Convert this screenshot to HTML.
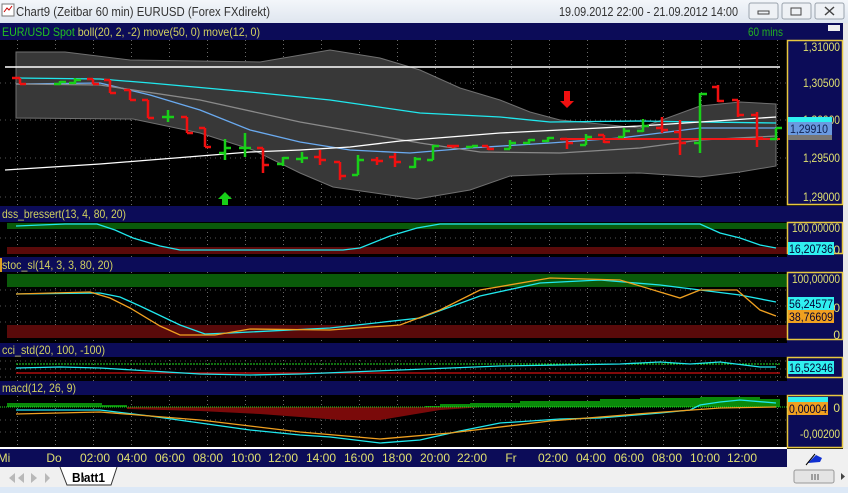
<!DOCTYPE html>
<html><head><meta charset="utf-8"><style>
body{margin:0;width:848px;height:493px;overflow:hidden;background:#f0f0f0;font-family:"Liberation Sans",sans-serif}
svg{display:block}
</style></head><body>
<svg width="848" height="493" viewBox="0 0 848 493" xmlns="http://www.w3.org/2000/svg" font-family="Liberation Sans, sans-serif">
<defs>
<linearGradient id="tb" x1="0" y1="0" x2="0" y2="1"><stop offset="0" stop-color="#f3f6fa"/><stop offset="1" stop-color="#dfe6ef"/></linearGradient>
<pattern id="vg" width="38" height="4" patternUnits="userSpaceOnUse" x="17"><rect x="0" y="0" width="1" height="1" fill="#6a6a6a"/></pattern>
</defs>
<rect x="0" y="0" width="848" height="23" fill="url(#tb)"/>
<rect x="2" y="4" width="12" height="12" fill="#fff" stroke="#777"/><path d="M4 12 l3-4 2 2 3-4" stroke="#c00" fill="none"/>
<text x="16" y="16" font-size="13" fill="#333" textLength="254" lengthAdjust="spacingAndGlyphs">Chart9 (Zeitbar 60 min)  EURUSD (Forex FXdirekt)</text>
<text x="559" y="16" font-size="13" fill="#333" textLength="179" lengthAdjust="spacingAndGlyphs">19.09.2012 22:00 - 21.09.2012 14:00</text>
<g fill="#eef1f5" stroke="#9aa3ad"><rect x="749" y="3" width="29" height="16" rx="2"/><rect x="782" y="3" width="29" height="16" rx="2"/><rect x="815" y="3" width="29" height="16" rx="2"/></g>
<rect x="758" y="11" width="11" height="3" fill="none" stroke="#444"/><rect x="791" y="8" width="10" height="7" fill="none" stroke="#444"/><path d="M825 7 l9 8 M834 7 l-9 8" stroke="#444" stroke-width="1.5"/>
<rect x="0" y="23" width="848" height="444" fill="#000"/>
<rect x="843" y="23" width="5" height="444" fill="#e8e8e8"/>
<g fill="#0c0c58">
<rect x="0" y="23" width="843" height="17"/><rect x="0" y="206" width="787" height="16"/><rect x="0" y="257" width="787" height="15"/><rect x="0" y="343" width="787" height="14"/><rect x="0" y="381" width="787" height="14"/>
<rect x="787" y="206" width="56" height="16"/><rect x="787" y="254" width="56" height="18"/><rect x="787" y="340" width="56" height="17"/><rect x="787" y="378" width="56" height="17"/>
</g>
<rect x="828" y="25" width="12" height="6" fill="#eee"/>
<text x="2" y="36" font-size="12" fill="#22c022" textLength="258" lengthAdjust="spacingAndGlyphs">EUR/USD Spot <tspan fill="#d0d060">boll(20, 2, -2) move(50, 0) move(12, 0)</tspan></text>
<text x="748" y="36" font-size="12" fill="#22b022" textLength="35" lengthAdjust="spacingAndGlyphs">60 mins</text>
<g font-size="12" fill="#d0d060">
<text x="2" y="218" textLength="124" lengthAdjust="spacingAndGlyphs">dss_bressert(13, 4, 80, 20)</text>
<text x="2" y="269" textLength="111" lengthAdjust="spacingAndGlyphs">stoc_sl(14, 3, 3, 80, 20)</text>
<text x="2" y="354" textLength="103" lengthAdjust="spacingAndGlyphs">cci_std(20, 100, -100)</text>
<text x="2" y="392" textLength="74" lengthAdjust="spacingAndGlyphs">macd(12, 26, 9)</text>
</g>
<rect x="0" y="258" width="2" height="14" fill="#e0a020"/>
<rect x="0" y="40" width="787" height="166" fill="url(#vg)"/>
<rect x="0" y="222" width="787" height="35" fill="url(#vg)"/>
<rect x="0" y="272" width="787" height="71" fill="url(#vg)"/>
<rect x="0" y="357" width="787" height="24" fill="url(#vg)"/>
<rect x="0" y="395" width="787" height="53" fill="url(#vg)"/>
<g stroke="#555" stroke-dasharray="1 4">
<path d="M0 83H787M0 120H787M0 158H787M0 197H787M0 238H787M0 290H787M0 306H787M0 322H787M0 361H787M0 369H787M0 377H787M0 420H787M0 432H787"/>
</g>
<path d="M16 52 L65 52 L130 60 L260 62 L330 50 L380 58 L420 70 L460 88 L500 100 L530 112 L560 120 L640 128 L700 106 L740 102 L776 104 L776 166 L740 172 L700 177 L640 173 L560 174 L510 176 L470 190 L417 199 L333 187 L300 173 L253 150 L200 133 L133 119 L16 118 Z" fill="#383838" stroke="#707070" stroke-width="1"/>
<path d="M5 67H780" stroke="#fff" stroke-width="1.5"/>
<g fill="none" stroke-width="1.3">
<polyline stroke="#20e8ee" points="16,78 100,79 150,83 250,92 330,100 420,113 500,117 550,122 640,121 700,122 776,123"/>
<polyline stroke="#6aaaf0" points="16,84 100,83 150,95 200,110 250,130 300,142 350,150 410,153 470,148 550,143 620,138 700,128 776,128"/>
<polyline stroke="#8a8a8a" points="16,84 100,85 200,100 300,122 420,143 480,152 560,153 640,148 700,140 776,136"/>
<polyline stroke="#fff" points="5,170 100,164 200,156 250,152 300,150 350,147 400,141 450,137 500,133 560,130 640,126 700,122 776,117"/>
<path d="M560 139H780" stroke="#f01818" stroke-width="2"/>
</g>
<g stroke-width="2.5" fill="none">
<g stroke="#f01010">
<path d="M20 78v6M12 78h8M20 84h6"/><path d="M93 79v5M87 79h6M93 84h6"/><path d="M110 80v13M104 80h6M110 93h6"/><path d="M130 90v10M124 90h6M130 100h6"/><path d="M148 100v18M142 100h6M148 118h6"/><path d="M187 117v16M181 117h6M187 133h6"/><path d="M205 128v19M199 128h6M205 147h6"/><path d="M263 148v25M257 148h6M263 165h6"/><path d="M320 150v15M314 157h6M320 160h6"/><path d="M340 162v18M334 162h6M340 176h6"/><path d="M377 157v8M371 160h6M377 161h6"/><path d="M395 153v14M389 157h6M395 162h6"/><path d="M453 145v3M447 146h6M453 146h6"/><path d="M488 146v4M482 146h6M488 149h6"/><path d="M567 139v10M561 139h6M567 143h6"/><path d="M604 135v8M598 135h6M604 142h6"/><path d="M662 117v16M656 128h6M662 130h6"/><path d="M680 120v35M674 132h6M680 143h6"/><path d="M718 85v17M712 87h6M718 101h6"/><path d="M738 100v17M732 100h6M738 115h6"/><path d="M757 112v35M751 115h6M757 138h6"/>
</g>
<g stroke="#18d018">
<path d="M60 81v4M54 84h6M60 82h6"/><path d="M75 78v6M69 83h6M75 80h6"/><path d="M168 110v12M162 117h6M168 117h6"/><path d="M225 139v21M219 153h6M225 148h6"/><path d="M245 133v24M239 148h6M245 148h6"/><path d="M283 157v9M277 164h6M283 158h6"/><path d="M302 152v11M296 159h6M302 158h6"/><path d="M358 155v20M352 175h6M358 160h6"/><path d="M415 157v11M409 167h6M415 159h6"/><path d="M433 145v15M427 160h6M433 146h6"/><path d="M472 146v2M466 147h6M472 146h6"/><path d="M510 140v9M504 149h6M510 143h6"/><path d="M529 139v5M523 143h6M529 140h6"/><path d="M548 137v5M542 141h6M548 138h6"/><path d="M586 134v11M580 145h6M586 137h6"/><path d="M624 128v9M618 137h6M624 131h6"/><path d="M643 119v13M637 131h6M643 126h6"/><path d="M700 93v60M694 143h6M700 94h7"/><path d="M776 128v12M770 139h6M776 128h6"/>
</g>
</g>
<path d="M225 192l-7 7h4v6h6v-6h4z" fill="#18d018"/>
<path d="M567 108l-7-7h4v-10h6v10h4z" fill="#f01010"/>
<rect x="7" y="223" width="780" height="6" fill="#0a5a0a"/><rect x="7" y="247" width="780" height="7" fill="#5a0a0a"/>
<polyline fill="none" stroke="#20e8ee" stroke-width="1.3" points="16,226 65,224 97,224 115,230 133,238 160,246 180,250 343,250 360,248 390,236 417,228 440,224 700,224 720,233 740,238 760,245 776,248"/>
<rect x="7" y="274" width="780" height="13" fill="#0a5a0a"/><rect x="7" y="325" width="780" height="13" fill="#5a0a0a"/>
<polyline fill="none" stroke="#20e8ee" stroke-width="1.3" points="16,294 100,293 120,297 140,306 180,325 205,334 230,333 330,328 420,318 480,296 540,283 600,280 660,285 700,290 740,295 776,302"/>
<polyline fill="none" stroke="#f0a020" stroke-width="1.3" points="16,294 90,292 110,298 130,308 160,326 180,335 215,335 250,329 330,330 400,325 440,310 480,290 550,278 620,280 680,298 700,290 737,290 760,310 776,316"/>
<path d="M16 364H780" stroke="#22e022" stroke-dasharray="2 1"/><path d="M16 373H780" stroke="#d01010" stroke-width="1.3"/>
<polyline fill="none" stroke="#20e8ee" stroke-width="1.3" points="16,368 60,367 100,368 150,371 200,374 250,375 300,374 350,372 400,370 450,368 500,366 560,365 620,364 660,362 690,364 720,362 760,367 776,367"/>
<rect x="7" y="403" width="95" height="4" fill="#0a8a0a"/><rect x="102" y="405" width="25" height="2" fill="#0a8a0a"/>
<path d="M127 407 L127 409 L200 411 L260 414 L300 417 L340 420 L380 420 L410 415 L440 410 L470 408 L480 407 Z" fill="#7a0a0a"/>
<path d="M425 407 V406 H440 V404 H470 V403 H520 V401 H600 V399 H640 V398 H700 V397 H760 V399 H780 V407 Z" fill="#0a8a0a"/>
<path d="M0 407H787" stroke="#22e022" stroke-dasharray="1 1"/>
<polyline fill="none" stroke="#20e8ee" stroke-width="1.3" points="16,410 100,410 150,416 200,423 250,430 300,435 330,437 380,443 420,440 460,431 500,423 560,419 600,418 660,413 690,410 700,405 720,402 740,400 776,403"/>
<polyline fill="none" stroke="#f0a020" stroke-width="1.3" points="16,414 100,412 200,420 300,432 380,439 450,433 550,421 650,413 720,408 776,407"/>
<path d="M0 448H787" stroke="#fff" stroke-width="2"/>
<g fill="#0c0c58" stroke="#e8c840" stroke-width="1.5">
<rect x="787.5" y="40.5" width="55" height="164"/><rect x="787.5" y="222.5" width="55" height="31"/><rect x="787.5" y="272.5" width="55" height="67"/><rect x="787.5" y="357.5" width="55" height="20"/><rect x="787.5" y="395.5" width="55" height="52"/>
</g>
<g font-size="12" fill="#e0e070" text-anchor="end" lengthAdjust="spacingAndGlyphs">
<text x="840" y="51" textLength="37" lengthAdjust="spacingAndGlyphs">1,31000</text><text x="840" y="87" textLength="37" lengthAdjust="spacingAndGlyphs">1,30500</text><text x="840" y="124" textLength="37" lengthAdjust="spacingAndGlyphs">1,30000</text><text x="840" y="162" textLength="37" lengthAdjust="spacingAndGlyphs">1,29500</text><text x="840" y="201" textLength="37" lengthAdjust="spacingAndGlyphs">1,29000</text>
<text x="840" y="232" textLength="48" lengthAdjust="spacingAndGlyphs">100,00000</text><text x="840" y="254">0</text>
<text x="840" y="283" textLength="48" lengthAdjust="spacingAndGlyphs">100,00000</text><text x="840" y="312">0</text><text x="840" y="339">0</text>
<text x="840" y="412">0</text><text x="840" y="438" textLength="40" lengthAdjust="spacingAndGlyphs">-0,00200</text>
</g>
<rect x="788" y="117" width="44" height="6" fill="#30f0f0"/>
<rect x="788" y="122" width="44" height="13" fill="#6a9ae0"/><text x="790" y="133" font-size="12" fill="#102050" textLength="38" lengthAdjust="spacingAndGlyphs">1,29910</text>
<rect x="788" y="135" width="44" height="5" fill="#777"/>
<rect x="788" y="242" width="46" height="13" fill="#30f0f0"/><text x="789" y="253" font-size="12" fill="#003" textLength="44" lengthAdjust="spacingAndGlyphs">16,20736</text>
<rect x="788" y="297" width="46" height="13" fill="#30f0f0"/><text x="789" y="308" font-size="12" fill="#003" textLength="44" lengthAdjust="spacingAndGlyphs">56,24577</text>
<rect x="788" y="310" width="46" height="13" fill="#f0a020"/><text x="789" y="321" font-size="12" fill="#003" textLength="44" lengthAdjust="spacingAndGlyphs">38,76609</text>
<rect x="788" y="361" width="46" height="13" fill="#30f0f0"/><text x="789" y="372" font-size="12" fill="#003" textLength="44" lengthAdjust="spacingAndGlyphs">16,52346</text>
<rect x="788" y="397" width="40" height="6" fill="#30f0f0"/>
<rect x="788" y="402" width="40" height="13" fill="#f0a020"/><text x="789" y="413" font-size="12" fill="#003" textLength="38" lengthAdjust="spacingAndGlyphs">0,00004</text>
<rect x="0" y="449" width="787" height="18" fill="#0c0c58"/>
<rect x="787" y="449" width="61" height="18" fill="#f0f0f0"/>
<path d="M808 463l8-8 6 3-2 4z" fill="#1030d0"/><path d="M806 465l9-11" stroke="#000"/>
<g font-size="12" fill="#e0e070" text-anchor="middle">
<text x="4" y="462">Mi</text><text x="54" y="462">Do</text><text x="95" y="462">02:00</text><text x="132" y="462">04:00</text><text x="170" y="462">06:00</text><text x="208" y="462">08:00</text><text x="246" y="462">10:00</text><text x="283" y="462">12:00</text><text x="321" y="462">14:00</text><text x="359" y="462">16:00</text><text x="397" y="462">18:00</text><text x="435" y="462">20:00</text><text x="472" y="462">22:00</text><text x="511" y="462">Fr</text><text x="553" y="462">02:00</text><text x="591" y="462">04:00</text><text x="629" y="462">06:00</text><text x="667" y="462">08:00</text><text x="705" y="462">10:00</text><text x="742" y="462">12:00</text>
</g>
<rect x="0" y="467" width="848" height="20" fill="#f0f0f0"/>
<g fill="#b8b8b8"><path d="M3 472v12M9 478l6-5v10z"/><path d="M18 478l6-5v10z"/><path d="M31 473v10l6-5z"/><path d="M45 473v10l5-5zM52 472v12"/></g>
<path d="M60 467l7 18h44l6-18" fill="#fff" stroke="#333"/>
<text x="72" y="482" font-size="13" font-weight="bold" fill="#000" textLength="33" lengthAdjust="spacingAndGlyphs">Blatt1</text>
<path d="M84 476l-3 3 3 3" fill="#444"/>
<rect x="794" y="470" width="40" height="13" rx="2" fill="#e4e4e4" stroke="#999"/><path d="M812 474v6M815 474v6M818 474v6" stroke="#555"/>
<path d="M841 473v7l4-3.5z" fill="#444"/>
<rect x="0" y="487" width="848" height="6" fill="#dce8f6"/>
</svg>
</body></html>
